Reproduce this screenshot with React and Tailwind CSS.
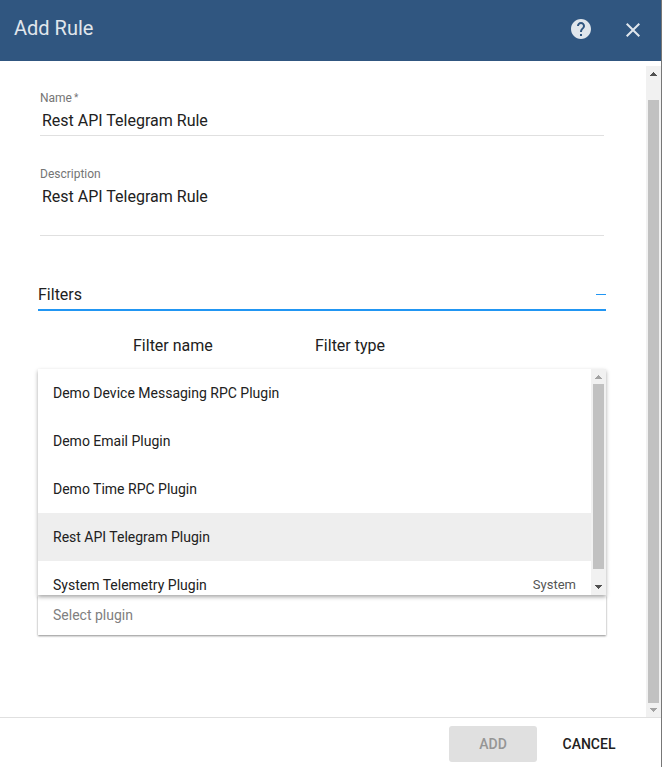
import React, { useState } from "react";
import { MdHelp, MdClose } from "react-icons/md";

const plugins = [
  { name: "Demo Device Messaging RPC Plugin" },
  { name: "Demo Email Plugin" },
  { name: "Demo Time RPC Plugin" },
  { name: "Rest API Telegram Plugin" },
  { name: "System Telemetry Plugin", scope: "System" },
];

function ArrowUp({ className }) {
  return (
    <svg viewBox="0 0 7 4" className={`h-1 w-[7px] ${className}`} fill="currentColor" shapeRendering="crispEdges" aria-hidden="true">
      <path d="M3 0h1v1h1v1h1v1h1v1H0V3h1V2h1V1h1z" />
    </svg>
  );
}

function ArrowDown({ className }) {
  return (
    <svg viewBox="0 0 7 4" className={`h-1 w-[7px] ${className}`} fill="currentColor" shapeRendering="crispEdges" aria-hidden="true">
      <path d="M0 0h7v1H6v1H5v1H4v1H3V3H2V2H1V1H0z" />
    </svg>
  );
}

function PageScrollbar() {
  return (
    <div className="flex w-[15px] shrink-0 flex-col items-center bg-[#f1f1f1] pt-1.5" aria-hidden="true">
      <ArrowUp className="text-[#505050]" />
      <div className="mt-6 mb-[5px] w-[11px] flex-1 bg-[#c1c1c1]" />
      <ArrowDown className="mb-[5px] text-[#a3a3a3]" />
    </div>
  );
}

function ListScrollbar() {
  return (
    <div className="flex w-[15px] shrink-0 flex-col items-center bg-[#f1f1f1] pt-1.5" aria-hidden="true">
      <ArrowUp className="text-[#a3a3a3]" />
      <div className="mt-[5px] mb-4 w-[11px] flex-1 bg-[#c1c1c1]" />
      <ArrowDown className="mb-1.5 text-[#505050]" />
    </div>
  );
}

function PluginPicker() {
  const [query, setQuery] = useState("");
  return (
    <div className="relative mt-[237px] shadow-[0_1px_2px_rgba(0,0,0,0.45)]">
      <input
        type="text"
        aria-label="Select plugin"
        placeholder="Select plugin"
        value={query}
        onChange={(e) => setQuery(e.target.value)}
        className="block h-10 w-full bg-white px-[15px] text-sm text-[#212121] outline-none placeholder:text-[#808080]"
      />
      <div className="absolute inset-x-0 bottom-full flex h-[226px] bg-white shadow-[0_2px_4px_rgba(0,0,0,0.35)]">
        <ul role="listbox" aria-label="Plugins" className="min-w-0 flex-1 overflow-hidden text-sm">
          {plugins.map((p, i) => (
            <li
              key={p.name}
              role="option"
              aria-selected={i === 3}
              className={`flex h-12 items-center justify-between px-[15px] ${i === 3 ? "bg-[#eeeeee]" : ""}`}
            >
              <span>{p.name}</span>
              {p.scope && <span className="text-[13px] text-[#555555]">{p.scope}</span>}
            </li>
          ))}
        </ul>
        <ListScrollbar />
      </div>
    </div>
  );
}

export default function App() {
  const [name, setName] = useState("Rest API Telegram Rule");
  const [description, setDescription] = useState("Rest API Telegram Rule");
  return (
    <form
      className="flex h-screen flex-col border-r border-[#777777] bg-white font-['Roboto',sans-serif] text-[#212121]"
      onSubmit={(e) => e.preventDefault()}
    >
      <header className="flex h-[61px] shrink-0 items-center justify-between bg-[#305680] pr-4 pl-3.5 text-[#e0e6ec]">
        <h2 className="pb-1.5 text-xl">Add Rule</h2>
        <div className="flex items-center gap-7">
          <button type="button" aria-label="Help" className="pb-1">
            <MdHelp size={24} />
          </button>
          <button type="button" aria-label="Close" className="pb-0.5">
            <MdClose size={24} />
          </button>
        </div>
      </header>

      <div className="mt-[5px] flex min-h-0 flex-1">
        <main className="min-w-0 flex-1 overflow-hidden pt-6 pr-10 pl-[38px]">
          <div className="px-0.5">
            <label htmlFor="name" className="block text-xs leading-4 text-[#757575]">
              Name<span className="ml-0.5 align-top text-[10px] leading-4">*</span>
            </label>
            <input
              id="name"
              value={name}
              onChange={(e) => setName(e.target.value)}
              className="block h-[30px] w-full border-b border-[#e0e0e0] px-0.5 text-base outline-none"
            />
          </div>
          <div className="mt-[30px] px-0.5">
            <label htmlFor="description" className="block text-xs leading-4 text-[#757575]">
              Description
            </label>
            <textarea
              id="description"
              value={description}
              onChange={(e) => setDescription(e.target.value)}
              className="block h-[54px] w-full resize-none border-b border-[#e0e0e0] px-0.5 pt-[3px] text-base outline-none"
            />
          </div>

          <button
            type="button"
            aria-expanded="true"
            className="mt-11 flex h-[31px] w-full items-center justify-between border-b-2 border-[#2196f3] text-base"
          >
            Filters
            <span className="h-px w-2.5 bg-[#2196f3]" aria-hidden="true" />
          </button>

          <table className="mt-[23px] w-full table-fixed text-left text-base">
            <thead>
              <tr>
                <th className="w-[95px] p-0" aria-hidden="true" />
                <th scope="col" className="w-[182px] p-0 font-normal">Filter name</th>
                <th scope="col" className="p-0 font-normal">Filter type</th>
              </tr>
            </thead>
          </table>

          <PluginPicker />
        </main>
        <PageScrollbar />
      </div>

      <footer className="flex h-[50px] shrink-0 items-center justify-end gap-2 border-t border-[#e0e0e0] pt-0.5 pr-7 text-sm font-medium">
        <button type="submit" disabled className="h-9 w-22 rounded-[3px] bg-[#e0e0e0] text-[#959595]">
          ADD
        </button>
        <button type="button" className="h-9 w-22">
          CANCEL
        </button>
      </footer>
    </form>
  );
}
